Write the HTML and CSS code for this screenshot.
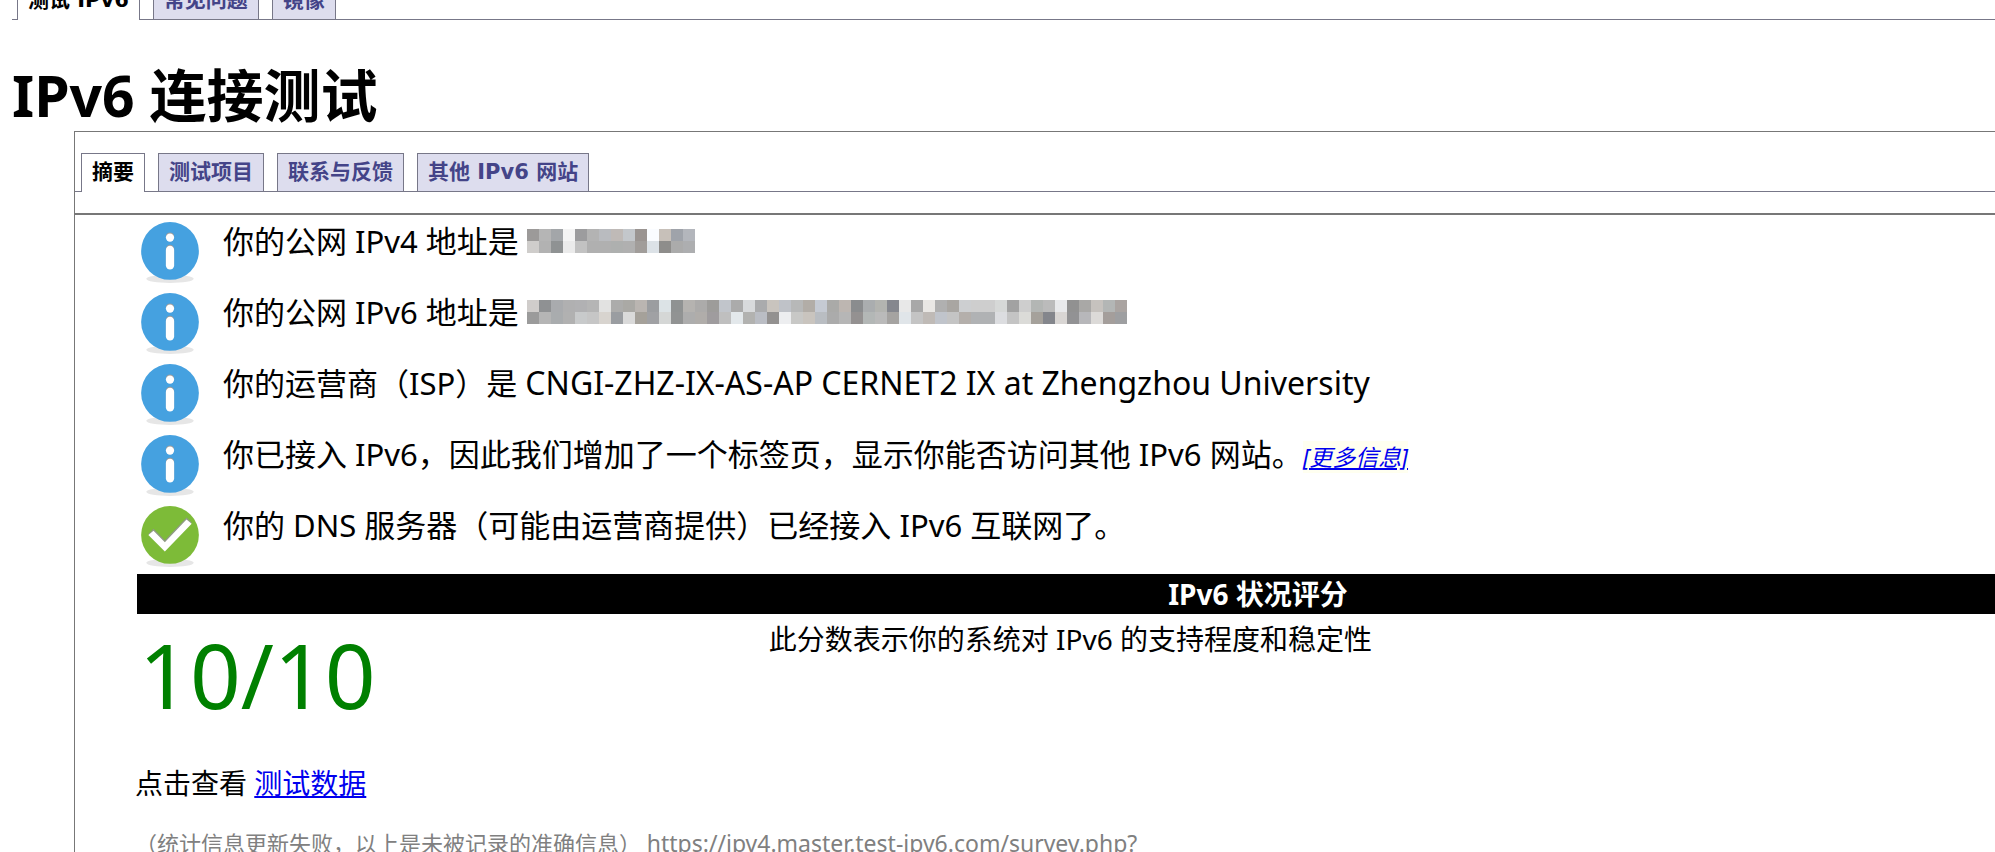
FILE: index.html
```html
<!DOCTYPE html>
<html lang="zh-CN">
<head>
  <meta charset="UTF-8">
  <title>IPv6 连接测试</title>
  <link rel="stylesheet" href="styles.css">
</head>
<body>
  <!-- Icons shared by the result rows -->
  <svg class="sprite" aria-hidden="true">
    <defs>
      <linearGradient id="blueEdge" x1="0" y1="0" x2="0" y2="1">
        <stop offset="0" stop-color="#8cc3e8"/>
        <stop offset="0.12" stop-color="#45a1e0"/>
        <stop offset="0.85" stop-color="#45a1e0"/>
        <stop offset="1" stop-color="#1f5f8f"/>
      </linearGradient>
      <linearGradient id="greenEdge" x1="0" y1="0" x2="0" y2="1">
        <stop offset="0" stop-color="#acd483"/>
        <stop offset="0.12" stop-color="#7dbb38"/>
        <stop offset="0.85" stop-color="#7dbb38"/>
        <stop offset="1" stop-color="#46751a"/>
      </linearGradient>
    </defs>
    <symbol id="info" viewBox="0 0 64 64">
      <ellipse cx="32" cy="58" rx="23" ry="4" fill="#e6e6e6"/>
      <circle cx="32" cy="31" r="30" fill="url(#blueEdge)"/>
      <circle cx="32" cy="31" r="28" fill="#45a1e0"/>
      <circle cx="32" cy="17" r="4" fill="#9a9a9a"/>
      <circle cx="32" cy="18" r="4" fill="#fff"/>
      <rect x="28" y="25" width="8" height="23" rx="4" fill="#9a9a9a"/>
      <rect x="28" y="26" width="8" height="23" rx="4" fill="#fff"/>
    </symbol>
    <symbol id="ok" viewBox="0 0 64 64">
      <ellipse cx="32" cy="58" rx="23" ry="4" fill="#e6e6e6"/>
      <circle cx="32" cy="31" r="30" fill="url(#greenEdge)"/>
      <circle cx="32" cy="31" r="28" fill="#7dbb38"/>
      <path d="M11 30 L16 25 L27 36 L48 14 L53 19 L27 46 Z" fill="#8f9a84"/>
      <path d="M11 31 L16 27 L27 38 L48 16 L53 20 L27 47 Z" fill="#fff"/>
    </symbol>
  </svg>

  <div class="page">
    <nav class="tabs tabs-site">
      <a class="tab active" href="#">测试 IPv6</a>
      <a class="tab" href="#">常见问题</a>
      <a class="tab" href="#">镜像</a>
    </nav>

    <h1>IPv6 连接测试</h1>

    <div class="panel">
      <nav class="tabs">
        <a class="tab active" href="#">摘要</a>
        <a class="tab" href="#">测试项目</a>
        <a class="tab" href="#">联系与反馈</a>
        <a class="tab" href="#">其他 IPv6 网站</a>
      </nav>

      <div class="content">
        <ul class="results">
          <li><svg class="icon"><use href="#info"/></svg><p>你的公网 IPv4 地址是 <span class="mask" data-mask="v4"></span></p></li>
          <li><svg class="icon"><use href="#info"/></svg><p>你的公网 IPv6 地址是 <span class="mask" data-mask="v6"></span></p></li>
          <li><svg class="icon"><use href="#info"/></svg><p>你的运营商（ISP）是 <span class="isp">CNGI-ZHZ-IX-AS-AP CERNET2 IX at Zhengzhou University</span></p></li>
          <li><svg class="icon"><use href="#info"/></svg><p>你已接入 IPv6，因此我们增加了一个标签页，显示你能否访问其他 IPv6 网站。<a class="more" href="#">[更多信息]</a></p></li>
          <li><svg class="icon"><use href="#ok"/></svg><p>你的 DNS 服务器（可能由运营商提供）已经接入 IPv6 互联网了。</p></li>
        </ul>

        <table class="score">
          <thead>
            <tr><th colspan="2">IPv6 状况评分</th></tr>
          </thead>
          <tbody>
            <tr>
              <td class="points">10/10</td>
              <td>此分数表示你的系统对 IPv6 的支持程度和稳定性</td>
            </tr>
          </tbody>
        </table>

        <p class="data">点击查看 <a href="#">测试数据</a></p>
        <p class="note">（统计信息更新失败，以上是未被记录的准确信息） <span class="url">https://ipv4.master.test-ipv6.com/survey.php?</span></p>
      </div>
    </div>
  </div>

  <script>
    // Two rows of colour blocks that hide each address
    const masks = {
      v4: [
        '9c9a99 b5b5b5 a3a6a9 f4f4f4 9c9c9e b3b3b3 b9bbbf bfbab7 c3c7cb 9a9491 fafcff c7c0b9 9fa3aa b3b6bc',
        'cfcdcb b2b2b2 8f9293 ebebeb c2c2c2 b0b0b0 b0b0b0 aeb0af b0b0b0 a19d9a dce2e7 8e8d8b ababab adaeb0'
      ],
      v6: [
        'd0cdcb 8f9193 a9abae b0b0b1 b1b1b3 b5b5b5 e2e2e1 acacab aaa9a5 bab5b1 9b9da0 dce3e6 8f9292 b5b3b0 acabaa 9d9c9a c1c5cb ababab d8dadc aaabad c9c4be bfc2c8 b7b8b8 b2ada7 c5cad3 aaaaa8 bdb6b1 8a8c8e aaadaf b3b4b0 85878e e8e8e8 a8a8a8 e9e7e4 b0b0b0 a9a6a2 cdcfd1 cecece cecece d6d8d7 a2a2a2 cecece b3b6b4 bbbbbb e8e9eb 919191 a9a8a6 c6c2be b3b6b5 aaa4a1',
        '9b9b9b b5b5b5 a9acae b1b1b1 c8cacb c6c6c6 d8d4cf 9a9da1 dadada a5a19a a0a1a4 d5d7d6 919393 adadad b0adaa 9f9c9e bfbfbf e3e8eb b2b2b0 babdc4 939190 edeef0 c8c8c6 c9c4be b9bdc2 ababab b6b6b6 949191 b3b7b6 bababa a5a3a1 e0e5e9 c4c4c4 bfbab6 c0c4cb c4c4c4 b4afab b0b2b4 b0b2b4 dcdde0 c4c4c4 dbdbd8 a5a19b 84868c d9d6d4 929294 b7b7ba dcdad8 a49e9b 9e9fa1'
      ]
    };

    document.querySelectorAll('.mask').forEach(mask => {
      masks[mask.dataset.mask].forEach(line => {
        const row = document.createElement('span');
        row.className = 'mask-row';
        line.split(' ').forEach(color => {
          const cell = document.createElement('i');
          cell.style.background = '#' + color;
          row.appendChild(cell);
        });
        mask.appendChild(row);
      });
    });
  </script>
</body>
</html>
```
FILE: styles.css
```css
/* Base */
body {
  margin: 0;
  overflow: hidden;
  background: #fff;
  color: #000;
  font-family: "Noto Sans", "Noto Sans CJK SC", sans-serif;
  font-size: 28px;
  line-height: 40px;
}

p {
  margin: 0;
}

a {
  color: #0000ee;
}

.sprite {
  display: none;
}

/* The summary is wider than the window */
.page {
  width: 123%;
  box-sizing: border-box;
  padding: 0 12px;
}

h1 {
  margin: 39px 0 0;
  font-size: 57px;
  line-height: 72px;
}

/* Tabs */
.tabs {
  display: flex;
  gap: 13px;
  padding: 0 6px;
  border-bottom: 1px solid #778;
  font-family: "DejaVu Sans", "Noto Sans CJK SC", sans-serif;
  font-size: 21px;
  font-weight: bold;
  line-height: 37px;
}

.tabs-site {
  margin-top: -19px;
  padding: 0 5px;
}

.tab {
  padding: 0 10px;
  border: 1px solid #778;
  border-bottom: none;
  background: #dde;
  color: #448;
  text-decoration: none;
}

.tab.active {
  margin-bottom: -1px;
  padding-bottom: 1px;
  background: #fff;
  color: #000;
}

/* Panel */
.panel {
  margin-left: 62px;
  padding-top: 21px;
  border: 1px solid #777;
}

.content {
  margin-top: 21px;
  padding: 4px 62px 0;
  border-top: 2px solid #777;
}

/* Result rows */
.results {
  margin: 0;
  padding: 0;
  list-style: none;
  font-size: 31px;
}

.results li {
  display: flex;
  gap: 20px;
  height: 71px;
}

.results p {
  padding-top: 2px;
}

.icon {
  width: 66px;
  height: 66px;
}

.isp {
  font-size: 32px;
}

.more {
  background: #fffff0;
  font-size: 23px;
  font-style: italic;
}

.mask {
  display: inline-block;
}

.mask-row {
  display: flex;
}

.mask-row i {
  width: 12px;
  height: 12px;
}

/* Score */
.score {
  width: 100%;
  border-collapse: collapse;
}

.score th {
  padding: 0;
  background: #000;
  color: #fff;
}

.score td {
  padding: 5px 4px;
  vertical-align: top;
}

.score .points {
  width: 28%;
  padding-left: 2px;
  color: green;
  font-size: 89px;
  line-height: 112px;
}

.data,
.note {
  margin-left: -2px;
}

.data {
  margin-top: 27px;
}

.note {
  margin-top: 20px;
  color: #808080;
  font-size: 22px;
}

.url {
  font-size: 23px;
}
```
